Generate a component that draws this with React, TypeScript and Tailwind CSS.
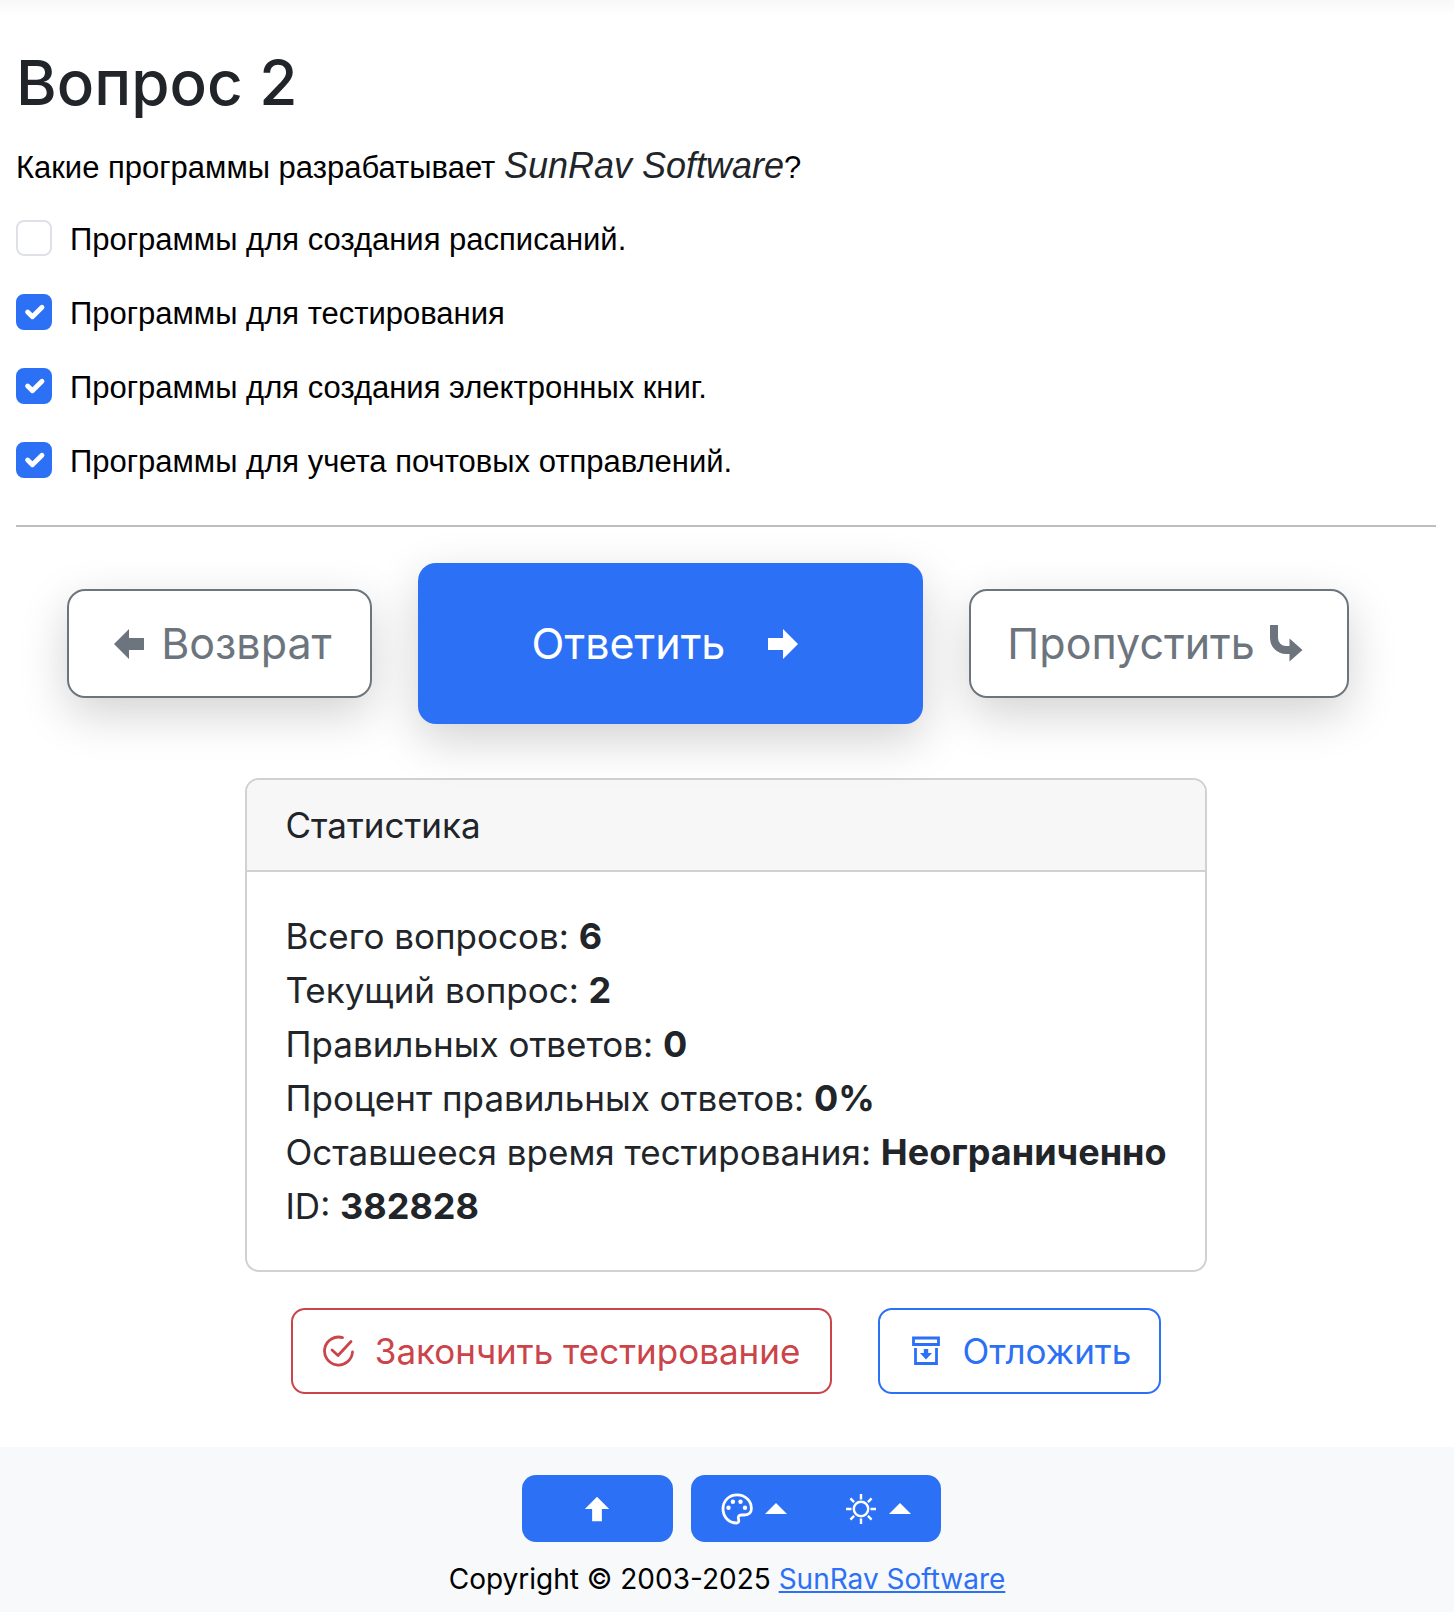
import { useState } from "react";

type Answer = {
  id: string;
  text: string;
};

type Stat = {
  label: string;
  value: string;
};

const answers: Answer[] = [
  { id: "schedule", text: "Программы для создания расписаний." },
  { id: "testing", text: "Программы для тестирования" },
  { id: "books", text: "Программы для создания электронных книг." },
  { id: "mail", text: "Программы для учета почтовых отправлений." },
];

const stats: Stat[] = [
  { label: "Всего вопросов", value: "6" },
  { label: "Текущий вопрос", value: "2" },
  { label: "Правильных ответов", value: "0" },
  { label: "Процент правильных ответов", value: "0%" },
  { label: "Оставшееся время тестирования", value: "Неограниченно" },
  { label: "ID", value: "382828" },
];

/* ======================================================
   ICONS
====================================================== */

function ArrowIcon({ className }: { className: string }) {
  return (
    <svg viewBox="0 0 32 32" fill="currentColor" className={className} aria-hidden="true">
      <path d="M1 10h15V1l15 15-15 15v-9H1z" />
    </svg>
  );
}

function SkipIcon() {
  return (
    <svg viewBox="0 0 34 38" fill="currentColor" className="h-[38px] w-[34px]" aria-hidden="true">
      <path d="M1 0h8v13a8 8 0 0 0 8 8h3.500v-7.500l13 11.500-13 11.500V29H17A16 16 0 0 1 1 13z" />
    </svg>
  );
}

function FinishIcon() {
  return (
    <svg
      viewBox="0 0 32 32"
      fill="none"
      stroke="currentColor"
      strokeWidth="2.800"
      strokeLinecap="round"
      strokeLinejoin="round"
      className="size-8"
      aria-hidden="true"
    >
      <path d="M19.500 2.600A14 14 0 1 0 29.500 17" />
      <path d="M9 15l6 5.500L28 6.500" />
    </svg>
  );
}

function PostponeIcon() {
  return (
    <svg viewBox="0 0 28 30" className="h-[30px] w-[28px]" aria-hidden="true">
      <path
        d="M1.500 2h25v6.500h-25zM3.500 12v15.500h21V12"
        fill="none"
        stroke="currentColor"
        strokeWidth="2.800"
      />
      <path d="M11.800 13h4.400v4H20l-6 6.500L8 17h3.800z" fill="currentColor" />
    </svg>
  );
}

function PaletteIcon() {
  return (
    <svg viewBox="0 0 32 32" fill="currentColor" className="size-8" aria-hidden="true">
      <path
        d="M16 1.800C8 1.800 2 8 2 15.800 2 24 8 30 15.500 30c1.700 0 2.600-1.100 2.200-3-.3-1.300-.9-2.400-.1-3.700.6-1 1.500-1.300 2.700-1.300H23.500c4.300 0 6.900-2.500 6.900-6.500C30.400 7.500 24 1.800 16 1.800z"
        fill="none"
        stroke="currentColor"
        strokeWidth="2.800"
      />
      <circle cx="7.500" cy="14.800" r="2.200" />
      <circle cx="11.900" cy="8.700" r="2.200" />
      <circle cx="19.500" cy="8.700" r="2.200" />
      <circle cx="24" cy="14.800" r="2.200" />
    </svg>
  );
}

function SunIcon() {
  return (
    <svg
      viewBox="0 0 32 32"
      fill="none"
      stroke="currentColor"
      strokeWidth="2.400"
      className="size-8"
      aria-hidden="true"
    >
      <circle cx="16" cy="16" r="7.200" />
      <path d="M16 1v5.500M16 25.500V31M1 16h5.500M25.500 16H31M5.400 5.400l3.700 3.700M22.900 22.900l3.700 3.700M5.400 26.600l3.700-3.700M22.900 9.100l3.700-3.700" />
    </svg>
  );
}

function CaretUp() {
  return (
    <svg viewBox="0 0 22 11" fill="currentColor" className="h-[11px] w-[22px]" aria-hidden="true">
      <path d="M11 0l11 11H0z" />
    </svg>
  );
}

/* ======================================================
   QUESTION PAGE
====================================================== */

export default function App() {
  const [checked, setChecked] = useState<string[]>(["testing", "books", "mail"]);

  function toggle(id: string) {
    setChecked((prev) =>
      prev.includes(id) ? prev.filter((item) => item !== id) : [...prev, id]
    );
  }

  return (
    <div className="min-h-screen bg-white font-[Inter,sans-serif] text-[35px] text-[#212529]">
      <div className="h-4 bg-linear-to-b from-[#f8f8f8] to-white" />

      <main className="pr-[18px] pl-4">
        <h1 className="pt-7 text-[62px] leading-[77px] font-medium">Вопрос 2</h1>

        <p className="mt-[18px] font-['Liberation_Sans',Arial,sans-serif] text-[31px] leading-[54px] text-black">
          Какие программы разрабатывает{" "}
          <em className="text-4xl leading-[54px] text-[#212529]">SunRav Software</em>?
        </p>

        <div className="mt-[18px] flex flex-col gap-5">
          {answers.map((answer) => (
            <label
              key={answer.id}
              className="flex items-start gap-[18px] font-['Liberation_Sans',Arial,sans-serif] text-[31px] leading-[54px] text-black"
            >
              <span className="mt-[7px] grid size-9 shrink-0">
                <input
                  type="checkbox"
                  checked={checked.includes(answer.id)}
                  onChange={() => toggle(answer.id)}
                  className="peer col-start-1 row-start-1 size-9 appearance-none rounded-lg border-2 border-[#dee2e6] bg-white checked:border-[#2c71f5] checked:bg-[#2c71f5]"
                />
                <svg
                  viewBox="0 0 20 20"
                  fill="none"
                  stroke="white"
                  strokeWidth="3"
                  strokeLinecap="round"
                  strokeLinejoin="round"
                  className="pointer-events-none invisible col-start-1 row-start-1 size-8 place-self-center peer-checked:visible"
                  aria-hidden="true"
                >
                  <path d="M6 10l3 3l6-6" />
                </svg>
              </span>
              {answer.text}
            </label>
          ))}
        </div>

        <hr className="mt-9 border-t-2 border-[#bdbebf]" />

        {/* ANSWER BUTTONS */}
        <div className="mt-9 flex items-center justify-center gap-[46px] pr-9 text-[43px] leading-[69px]">
          <button className="flex items-center gap-4 rounded-[18px] border-2 border-[#6c757d] py-[18px] pr-[38px] pl-11 text-[#6c757d] shadow-[0_16px_48px_rgba(0,0,0,0.18)]">
            <ArrowIcon className="size-8 rotate-180" />
            Возврат
          </button>
          <button className="flex items-center gap-[42px] rounded-[18px] bg-[#2c71f5] py-[46px] pr-[124px] pl-[114px] text-white shadow-[0_16px_48px_rgba(0,0,0,0.18)]">
            Ответить
            <ArrowIcon className="size-8" />
          </button>
          <button className="flex items-center gap-[14px] rounded-[18px] border-2 border-[#6c757d] py-[18px] pr-11 pl-9 text-[#6c757d] shadow-[0_16px_48px_rgba(0,0,0,0.18)]">
            Пропустить
            <SkipIcon />
          </button>
        </div>

        {/* STATISTICS */}
        <section className="mx-auto mt-[54px] w-fit overflow-hidden rounded-[14px] border-2 border-[#d0d1d2] bg-white">
          <h2 className="border-b-2 border-[#d0d1d2] bg-[#f7f7f7] px-[38px] py-[18px] leading-[54px]">
            Статистика
          </h2>
          <div className="px-[38px] py-[37px] leading-[54px]">
            {stats.map((stat) => (
              <p key={stat.label}>
                {stat.label}:{" "}
                <strong className="text-4xl leading-[54px] font-bold">{stat.value}</strong>
              </p>
            ))}
          </div>
        </section>

        <div className="mt-9 flex items-center justify-center gap-[46px] leading-[54px]">
          <button className="flex items-center gap-5 rounded-[14px] border-2 border-[#cb444a] px-[30px] py-[14px] text-[#cb444a]">
            <FinishIcon />
            Закончить тестирование
          </button>
          <button className="flex items-center gap-[22px] rounded-[14px] border-2 border-[#2c71f5] py-[14px] pr-7 pl-8 text-[#2c71f5]">
            <PostponeIcon />
            Отложить
          </button>
        </div>
      </main>

      {/* FOOTER */}
      <footer className="mt-[53px] bg-[#f8f9fb] pt-7 pb-3 text-[28px] leading-[42px]">
        <div className="flex justify-center gap-[18px] pl-2 text-white">
          <button
            aria-label="Наверх"
            className="flex h-[67px] w-[151px] items-center justify-center rounded-[14px] bg-[#2c71f5]"
          >
            <ArrowIcon className="size-[26px] -rotate-90" />
          </button>
          <div className="flex h-[67px] rounded-[14px] bg-[#2c71f5]">
            <button aria-label="Палитра" className="flex items-center gap-3 pr-7 pl-[30px]">
              <PaletteIcon />
              <CaretUp />
            </button>
            <button aria-label="Тема" className="flex items-center gap-3 px-[30px]">
              <SunIcon />
              <CaretUp />
            </button>
          </div>
        </div>
        <p className="mt-4 text-center text-black">
          Copyright © 2003-2025{" "}
          <a href="#sunrav" className="text-[#2c71f5] underline">
            SunRav Software
          </a>
        </p>
      </footer>
    </div>
  );
}
